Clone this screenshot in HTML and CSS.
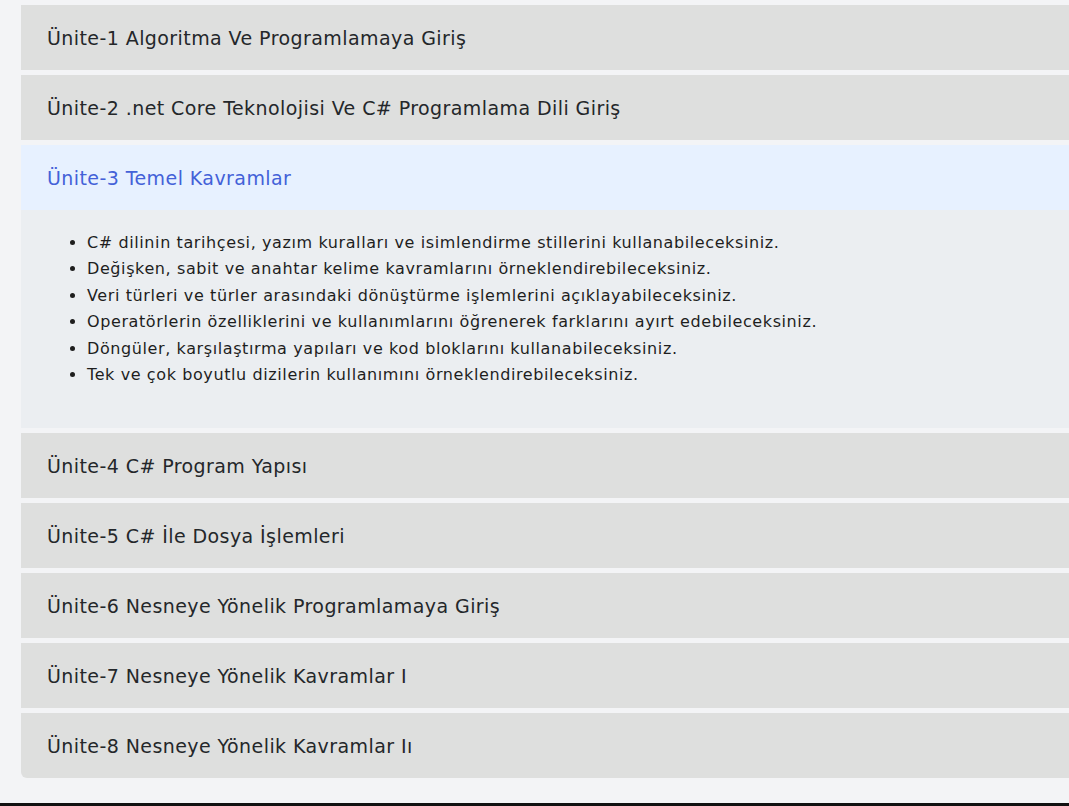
FILE: index.html
```html
<!DOCTYPE html>
<html lang="tr">
<head>
<meta charset="utf-8">
<link rel="stylesheet" href="styles.css">
</head>
<body>
<div class="page">
  <div class="accordion">
    <div class="item"><div class="head">Ünite-1 Algoritma Ve Programlamaya Giriş</div></div>
    <div class="item"><div class="head">Ünite-2 .net Core Teknolojisi Ve C# Programlama Dili Giriş</div></div>
    <div class="item open">
      <div class="head">Ünite-3 Temel Kavramlar</div>
      <div class="body">
        <ul>
          <li>C# dilinin tarihçesi, yazım kuralları ve isimlendirme stillerini kullanabileceksiniz.</li>
          <li>Değişken, sabit ve anahtar kelime kavramlarını örneklendirebileceksiniz.</li>
          <li>Veri türleri ve türler arasındaki dönüştürme işlemlerini açıklayabileceksiniz.</li>
          <li>Operatörlerin özelliklerini ve kullanımlarını öğrenerek farklarını ayırt edebileceksiniz.</li>
          <li>Döngüler, karşılaştırma yapıları ve kod bloklarını kullanabileceksiniz.</li>
          <li>Tek ve çok boyutlu dizilerin kullanımını örneklendirebileceksiniz.</li>
        </ul>
      </div>
    </div>
    <div class="item"><div class="head">Ünite-4 C# Program Yapısı</div></div>
    <div class="item"><div class="head">Ünite-5 C# İle Dosya İşlemleri</div></div>
    <div class="item"><div class="head">Ünite-6 Nesneye Yönelik Programlamaya Giriş</div></div>
    <div class="item"><div class="head">Ünite-7 Nesneye Yönelik Kavramlar I</div></div>
    <div class="item last"><div class="head">Ünite-8 Nesneye Yönelik Kavramlar Iı</div></div>
  </div>
</div>
<div class="edge"></div>
</body>
</html>
```
FILE: styles.css
```css
html, body {
  margin: 0;
  padding: 0;
  overflow: hidden;
}
body {
  background: #f3f4f6;
  font-family: "DejaVu Sans", sans-serif;
  color: #212529;
  width: 1069px;
  height: 806px;
}
.page {
  height: 803px;
  padding: 5px 0 0 21px;
  box-sizing: border-box;
}
.accordion {
  display: flex;
  flex-direction: column;
  gap: 5px;
  margin-right: -12px;
}
.item {
  background: #dedfde;
}
.item.last {
  border-radius: 0 0 6px 6px;
}
.head {
  height: 65px;
  display: flex;
  align-items: center;
  padding-left: 26px;
  font-size: 19px;
  letter-spacing: 0.42px;
  color: #24272a;
}
.open .head {
  background: #e7f1ff;
  color: #4361d8;
}
.open .body {
  background: #ebeef1;
  padding: 20px 20px 40px 26px;
}
.body ul {
  margin: 0;
  padding-left: 40px;
  font-size: 16px;
  letter-spacing: 0.6px;
  line-height: 26.4px;
  color: #1e1e1e;
}
.edge {
  height: 3px;
  background: #111;
}
```
